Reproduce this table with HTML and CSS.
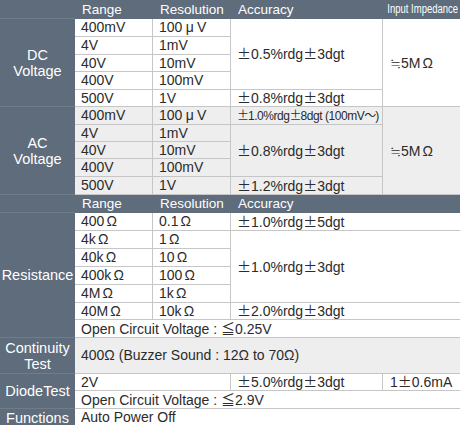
FILE: index.html
```html
<!DOCTYPE html>
<html lang="ja">
<head>
<meta charset="utf-8">
<title>Specifications</title>
<link rel="stylesheet" href="styles.css">
</head>
<body>
<table class="spec">
  <colgroup>
    <col class="c-label"><col class="c-range"><col class="c-res"><col class="c-acc"><col class="c-imp">
  </colgroup>
  <tbody>
    <tr class="h18 head">
      <th class="lab"></th><th>Range</th><th>Resolution</th><th>Accuracy</th>
      <th class="imp-h"><div class="imp-wrap"><span>Input Impedance</span></div></th>
    </tr>

    <tr class="h18">
      <th class="lab" rowspan="5">DC<br>Voltage</th>
      <td>400mV</td><td>100<span class="fw">μ</span>V</td>
      <td rowspan="4"><span class="j">±</span>0.5%rdg<span class="j">±</span>3dgt</td>
      <td rowspan="5" class="imp"><span class="j">≒</span>5M<span class="fw">Ω</span></td>
    </tr>
    <tr class="h18"><td>4V</td><td>1mV</td></tr>
    <tr class="h17"><td>40V</td><td>10mV</td></tr>
    <tr class="h18"><td>400V</td><td>100mV</td></tr>
    <tr class="h17"><td>500V</td><td>1V</td><td><span class="j">±</span>0.8%rdg<span class="j">±</span>3dgt</td></tr>

    <tr class="h17 grey">
      <th class="lab" rowspan="5">AC<br>Voltage</th>
      <td>400mV</td><td>100<span class="fw">μ</span>V</td>
      <td class="small"><span class="j">±</span>1.0%rdg<span class="j">±</span>8dgt (100mV<span class="j">〜</span>)</td>
      <td rowspan="5" class="imp"><span class="j">≒</span>5M<span class="fw">Ω</span></td>
    </tr>
    <tr class="h17 grey"><td>4V</td><td>1mV</td><td rowspan="3"><span class="j">±</span>0.8%rdg<span class="j">±</span>3dgt</td></tr>
    <tr class="h17 grey"><td>40V</td><td>10mV</td></tr>
    <tr class="h18 grey"><td>400V</td><td>100mV</td></tr>
    <tr class="h18 grey"><td>500V</td><td>1V</td><td><span class="j">±</span>1.2%rdg<span class="j">±</span>3dgt</td></tr>

    <tr class="h18 head">
      <th class="lab"></th><th>Range</th><th>Resolution</th><th colspan="2">Accuracy</th>
    </tr>
    <tr class="h18">
      <th class="lab" rowspan="7">Resistance</th>
      <td>400<span class="fw">Ω</span></td><td>0.1<span class="fw">Ω</span></td>
      <td colspan="2"><span class="j">±</span>1.0%rdg<span class="j">±</span>5dgt</td>
    </tr>
    <tr class="h18"><td>4k<span class="fw">Ω</span></td><td>1<span class="fw">Ω</span></td><td colspan="2" rowspan="4"><span class="j">±</span>1.0%rdg<span class="j">±</span>3dgt</td></tr>
    <tr class="h18"><td>40k<span class="fw">Ω</span></td><td>10<span class="fw">Ω</span></td></tr>
    <tr class="h18"><td>400k<span class="fw">Ω</span></td><td>100<span class="fw">Ω</span></td></tr>
    <tr class="h18"><td>4M<span class="fw">Ω</span></td><td>1k<span class="fw">Ω</span></td></tr>
    <tr class="h17"><td>40M<span class="fw">Ω</span></td><td>10k<span class="fw">Ω</span></td><td colspan="2"><span class="j">±</span>2.0%rdg<span class="j">±</span>3dgt</td></tr>
    <tr class="h18"><td colspan="4">Open Circuit Voltage : <span class="j">≦</span>0.25V</td></tr>

    <tr class="h36 grey">
      <th class="lab">Continuity<br>Test</th>
      <td colspan="4">400Ω (Buzzer Sound : 12Ω to 70Ω)</td>
    </tr>

    <tr class="h17">
      <th class="lab" rowspan="2">DiodeTest</th>
      <td colspan="2">2V</td>
      <td><span class="j">±</span>5.0%rdg<span class="j">±</span>3dgt</td>
      <td class="imp">1<span class="j">±</span>0.6mA</td>
    </tr>
    <tr class="h18"><td colspan="4">Open Circuit Voltage : <span class="j">≦</span>2.9V</td></tr>

    <tr class="h18">
      <th class="lab">Functions</th>
      <td colspan="4">Auto Power Off</td>
    </tr>
  </tbody>
</table>
</body>
</html>
```

FILE: styles.css
```css
html, body {
  margin: 0;
  padding: 0;
  background: #ffffff;
}

.spec {
  width: 460px;
  table-layout: fixed;
  border-collapse: collapse;
  font-family: "Liberation Sans", Arial, "Noto Sans CJK JP", sans-serif;
  font-size: 14px;
  color: #2b2b2b;
}

.c-label { width: 74px; }
.c-range { width: 78px; }
.c-res { width: 78px; }
.c-acc { width: 152px; }
.c-imp { width: 78px; }

.h17 { height: 17px; }
.h18 { height: 18px; }
.h36 { height: 36px; }

.spec td {
  border: 1px solid #c6c6c6;
  padding: 0 4px 0 6px;
  line-height: 15px;
  vertical-align: middle;
  white-space: nowrap;
  background: #ffffff;
}

.spec tr.grey td {
  background: #eeeeee;
}

.spec th {
  background: #5e6c7c;
  color: #ffffff;
  font-weight: normal;
  text-align: left;
  border: 1px solid #5e6c7c;
  padding: 0 4px 0 7px;
  line-height: 15px;
  font-size: 13.5px;
  white-space: nowrap;
}

.spec th.lab {
  text-align: center;
  padding: 0;
  font-size: 14.5px;
  line-height: 16px;
  border-bottom-color: #6f7c8a;
}

.spec th.imp-h {
  padding: 0 2px 0 0;
}

.imp-wrap {
  display: flex;
  justify-content: flex-end;
}

.imp-wrap span {
  flex: none;
  display: block;
  font-size: 12.5px;
  transform: scaleX(0.76);
  transform-origin: right center;
}

.spec td.imp {
  padding-left: 7px;
}

.spec td.small {
  font-size: 12px;
  letter-spacing: -0.45px;
}

.spec td.small .j {
  letter-spacing: -1px;
}

.j {
  font-family: "Noto Sans CJK JP", sans-serif;
}

.fw {
  display: inline-block;
  width: 1.05em;
  text-align: center;
}
```
